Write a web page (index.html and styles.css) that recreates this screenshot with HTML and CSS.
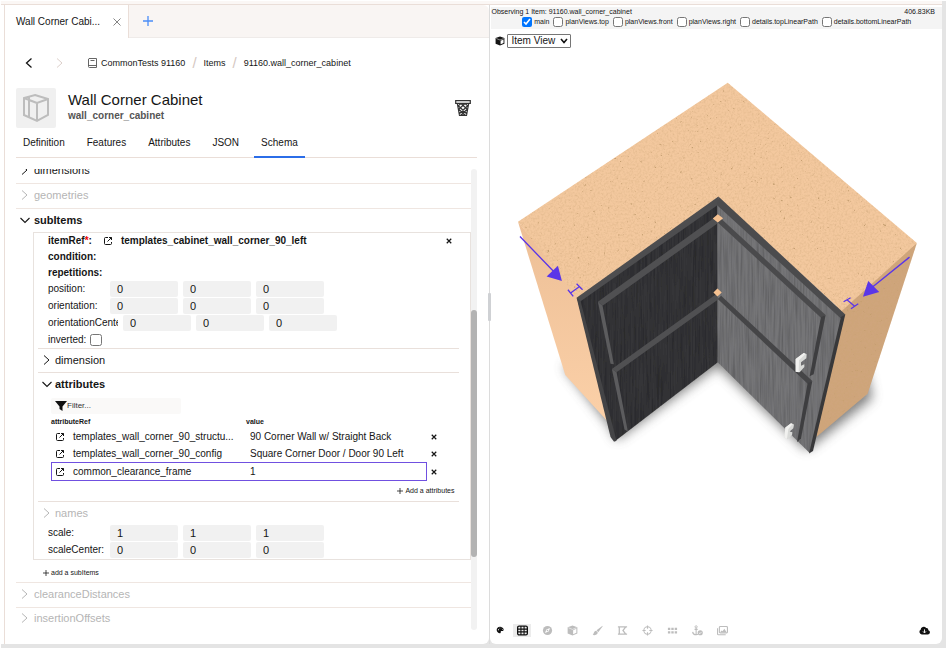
FILE: index.html
```html
<!DOCTYPE html>
<html lang="en">
<head>
    <meta charset="UTF-8">
    <meta name="viewport" content="width=device-width, initial-scale=1.0">
    <title>Wall Corner Cabinet</title>
    <link rel="stylesheet" href="styles.css">
</head>
<body>
    <!-- Shared icons -->
    <svg class="sprite" width="0" height="0" aria-hidden="true">
        <symbol id="chevron-right" viewBox="0 0 10 10"><path d="M2 0.5 7 5 2 9.5" fill="none" stroke="currentColor"/></symbol>
        <symbol id="chevron-left" viewBox="0 0 10 10"><path d="M7.5 0.5 2.5 5 7.5 9.5" fill="none" stroke="currentColor" stroke-width="1.3"/></symbol>
        <symbol id="chevron-down" viewBox="0 0 10 10"><path d="M0.5 3 5 7.5 9.5 3" fill="none" stroke="currentColor" stroke-width="1.1"/></symbol>
        <symbol id="open" viewBox="0 0 10 10"><path d="M5 1.5H2.5Q1.5 1.5 1.5 2.5V7.5Q1.5 8.5 2.5 8.5H7.5Q8.5 8.5 8.5 7.5V6M6 1.5H8.5V4M8.5 1.5 4.5 5.5" fill="none" stroke="currentColor" stroke-width="1"/></symbol>
        <symbol id="close" viewBox="0 0 8 8"><path d="M1 1 7 7M7 1 1 7" stroke="currentColor" stroke-width="1.6"/></symbol>
        <symbol id="plus" viewBox="0 0 10 10"><path d="M5 0V10M0 5H10" stroke="currentColor" stroke-width="1.3"/></symbol>
        <symbol id="cube" viewBox="0 0 12 12"><path d="M6 .5 11.3 2.5V9.3L6 11.5.7 9.3V2.5Z" fill="currentColor"/><path d="M6.7 5.6 10.2 4.2V8.5L6.7 10Z" fill="#fff"/><path d="M1.5 3 6 4.8 10.5 3" fill="none" stroke="#fff" stroke-width=".6"/></symbol>
    </svg>

    <div class="window">
        <div class="titlebar"></div>
        <div class="panes">
            <main class="editor">
                <div class="tabstrip">
                    <div class="doc-tab">
                        <span>Wall Corner Cabi...</span>
                        <button class="icon-btn" aria-label="Close tab"><svg class="tab-x" viewBox="0 0 8 8"><path d="M.5.5 7.5 7.5M7.5.5.5 7.5" stroke="#666" stroke-width=".8"/></svg></button>
                    </div>
                    <button class="icon-btn new-tab" aria-label="New tab"><svg><use href="#plus"/></svg></button>
                </div>

                <div class="editor-body">
                    <nav class="crumbs">
                        <button class="icon-btn" aria-label="Back"><svg><use href="#chevron-left"/></svg></button>
                        <button class="icon-btn forward" aria-label="Forward"><svg><use href="#chevron-right"/></svg></button>
                        <a href="#"><svg class="book" viewBox="0 0 9 10"><path d="M1 .5H8.5V9.5H1.5Q.5 9.5.5 8.5V1ZM.5 7.5H8.5M2.5 2.5H6.5" fill="none" stroke="#555" stroke-width=".9"/></svg>CommonTests 91160</a>
                        <i>/</i>
                        <a href="#">Items</a>
                        <i>/</i>
                        <a href="#">91160.wall_corner_cabinet</a>
                    </nav>

                    <header class="item-head">
                        <div class="thumb">
                            <svg viewBox="0 0 28 30"><path d="M13 2 26 6V22L15 28 2 22V5ZM2 5 15 10 26 6M15 10V28M7 3.5V24.5M7 7 15 10" fill="none" stroke="#bdbdbd" stroke-width="2"/></svg>
                        </div>
                        <div class="item-name">
                            <h1>Wall Corner Cabinet</h1>
                            <p>wall_corner_cabinet</p>
                        </div>
                        <button class="icon-btn trash" aria-label="Delete item">
                            <svg viewBox="0 0 16 16"><path d="M.7.7H15.3V3.3H.7ZM2.3 3.5 4.5 15.3H11.5L13.7 3.5M3 6 6 3.5 12.5 9.5M3.5 9 10 15M13 6 10 3.5 3.5 9.5M12.5 9 6 15M3 5.5 12 14M13 5.5 4 14" fill="none" stroke="#333" stroke-width="1.2"/></svg>
                        </button>
                    </header>

                    <nav class="tabs">
                        <a href="#">Definition</a>
                        <a href="#">Features</a>
                        <a href="#">Attributes</a>
                        <a href="#">JSON</a>
                        <a href="#" class="active">Schema</a>
                    </nav>

                    <div class="scroller">
                        <div class="schema">
                            <button class="section scrolled"><svg><use href="#chevron-right"/></svg>dimensions</button>
                            <button class="section empty"><svg><use href="#chevron-right"/></svg>geometries</button>
                            <button class="section open"><svg><use href="#chevron-down"/></svg>subItems</button>

                            <div class="subitem">
                                <div class="fields">
                                    <div class="ref-row">
                                        <span>itemRef<em>*</em>:</span>
                                        <button class="icon-btn" aria-label="Open itemRef"><svg><use href="#open"/></svg></button>
                                        <span class="ref-value">templates_cabinet_wall_corner_90_left</span>
                                        <button class="icon-btn remove" aria-label="Remove subItem"><svg><use href="#close"/></svg></button>
                                    </div>
                                    <div class="ref-row">condition:</div>
                                    <div class="ref-row">repetitions:</div>
                                    <div class="vector">
                                        <label for="posX">position:</label>
                                        <input id="posX" value="0"><input aria-label="position y" value="0"><input aria-label="position z" value="0">
                                    </div>
                                    <div class="vector">
                                        <label for="oriX">orientation:</label>
                                        <input id="oriX" value="0"><input aria-label="orientation y" value="0"><input aria-label="orientation z" value="0">
                                    </div>
                                    <div class="vector long">
                                        <label for="oricX">orientationCenter:</label>
                                        <input id="oricX" value="0"><input aria-label="orientationCenter y" value="0"><input aria-label="orientationCenter z" value="0">
                                    </div>
                                    <div class="inverted">
                                        <label for="inverted">inverted:</label>
                                        <input type="checkbox" id="inverted">
                                    </div>
                                </div>

                                <div class="nested">
                                    <button class="section"><svg><use href="#chevron-right"/></svg>dimension</button>
                                </div>

                                <div class="nested">
                                    <button class="section open"><svg><use href="#chevron-down"/></svg>attributes</button>
                                    <div class="attributes">
                                        <div class="filter">
                                            <svg viewBox="0 0 12 10"><path d="M0 0H12L7.5 5.5V10L4.5 8V5.5Z" fill="#111"/></svg>
                                            <input type="text" placeholder="Filter..." aria-label="Filter">
                                        </div>
                                        <table>
                                            <thead>
                                                <tr><th>attributeRef</th><th>value</th><th></th></tr>
                                            </thead>
                                            <tbody>
                                                <tr>
                                                    <td><button class="icon-btn" aria-label="Open"><svg><use href="#open"/></svg></button>templates_wall_corner_90_structu...</td>
                                                    <td>90 Corner Wall w/ Straight Back</td>
                                                    <td><button class="icon-btn remove" aria-label="Remove"><svg><use href="#close"/></svg></button></td>
                                                </tr>
                                                <tr>
                                                    <td><button class="icon-btn" aria-label="Open"><svg><use href="#open"/></svg></button>templates_wall_corner_90_config</td>
                                                    <td>Square Corner Door / Door 90 Left</td>
                                                    <td><button class="icon-btn remove" aria-label="Remove"><svg><use href="#close"/></svg></button></td>
                                                </tr>
                                                <tr class="selected">
                                                    <td><button class="icon-btn" aria-label="Open"><svg><use href="#open"/></svg></button>common_clearance_frame</td>
                                                    <td>1</td>
                                                    <td><button class="icon-btn remove" aria-label="Remove"><svg><use href="#close"/></svg></button></td>
                                                </tr>
                                            </tbody>
                                        </table>
                                        <button class="add"><svg><use href="#plus"/></svg>Add a attributes</button>
                                    </div>
                                </div>

                                <div class="nested">
                                    <button class="section empty"><svg><use href="#chevron-right"/></svg>names</button>
                                </div>

                                <div class="fields">
                                    <div class="vector">
                                        <label for="scaleX">scale:</label>
                                        <input id="scaleX" value="1"><input aria-label="scale y" value="1"><input aria-label="scale z" value="1">
                                    </div>
                                    <div class="vector">
                                        <label for="scalecX">scaleCenter:</label>
                                        <input id="scalecX" value="0"><input aria-label="scaleCenter y" value="0"><input aria-label="scaleCenter z" value="0">
                                    </div>
                                </div>
                            </div>

                            <button class="add add-sub"><svg><use href="#plus"/></svg>add a subItems</button>
                            <button class="section empty"><svg><use href="#chevron-right"/></svg>clearanceDistances</button>
                            <button class="section empty"><svg><use href="#chevron-right"/></svg>insertionOffsets</button>
                        </div>
                        <div class="scrollbar"><div class="thumb-bar"></div></div>
                    </div>
                </div>
            </main>

            <div class="splitter"><span></span></div>

            <section class="viewer">
                <div class="observe">
                    <div class="observe-info"><span>Observing 1 Item: 91160.wall_corner_cabinet</span><span>406.83KB</span></div>
                    <div class="views">
                        <label><input type="checkbox" checked>main</label>
                        <label><input type="checkbox">planViews.top</label>
                        <label><input type="checkbox">planViews.front</label>
                        <label><input type="checkbox">planViews.right</label>
                        <label><input type="checkbox">details.topLinearPath</label>
                        <label><input type="checkbox">details.bottomLinearPath</label>
                    </div>
                </div>
                <div class="view-select">
                    <svg><use href="#cube"/></svg>
                    <select aria-label="View"><option>Item View</option></select>
                </div>

                <div class="stage">
                    <svg viewBox="-30 -66 1356 1640" role="img" aria-label="Corner cabinet model">
                        <defs>
                            <filter id="board" x="0" y="0" width="100%" height="100%">
                                <feTurbulence type="fractalNoise" baseFrequency="0.1" numOctaves="3" seed="4"/>
                                <feColorMatrix values="0 0 0 0 .55  0 0 0 0 .34  0 0 0 0 .16  0 -7 0 0 1.9" result="n"/>
                                <feTurbulence type="fractalNoise" baseFrequency="0.16" numOctaves="2" seed="9"/>
                                <feColorMatrix values="0 0 0 0 .6  0 0 0 0 .38  0 0 0 0 .18  .9 0 0 0 -.38" result="s"/>
                                <feComposite in="n" in2="SourceGraphic" operator="in" result="a"/>
                                <feComposite in="s" in2="SourceGraphic" operator="in" result="b"/>
                                <feMerge><feMergeNode in="SourceGraphic"/><feMergeNode in="a"/><feMergeNode in="b"/></feMerge>
                            </filter>
                            <filter id="grain" x="0" y="0" width="100%" height="100%">
                                <feTurbulence type="fractalNoise" baseFrequency="0.18 0.008" numOctaves="2" seed="3"/>
                                <feColorMatrix values="0 0 0 0 0  0 0 0 0 0  0 0 0 0 0  .7 0 0 0 -.26" result="n"/>
                                <feComposite in="n" in2="SourceGraphic" operator="in" result="a"/>
                                <feMerge><feMergeNode in="SourceGraphic"/><feMergeNode in="a"/></feMerge>
                            </filter>
                            <filter id="soft" x="-20%" y="-20%" width="140%" height="140%"><feGaussianBlur stdDeviation="18"/></filter>
                            <linearGradient id="side" x1="0" y1="0" x2="0" y2="1"><stop offset="0" stop-color="#edbf96"/><stop offset="1" stop-color="#fbd0a8"/></linearGradient>
                        </defs>

                        <!-- Floor shadow -->
                        <path d="M190 890 330 1070 350 1112 654 890 920 1142 950 1120 1118 985 1100 900 654 780Z" fill="#555" opacity=".75" filter="url(#soft)"/>

                        <!-- Carcass -->
                        <path d="M54 456 240 680 322 1054 196 916Z" fill="url(#side)"/>
                        <path d="M1252 520 1010 710 950 1102 1104 972Z" fill="#cfa57c" filter="url(#board)"/>
                        <path d="M684 38 1252 520 1026 724 656 384 234 686 54 456Z" fill="#f3c89e" filter="url(#board)"/>

                        <!-- Left door -->
                        <path d="M232 686 654 402V878L344 1116Z" fill="#363638" filter="url(#grain)"/>
                        <path d="M230 684 656 380V404L240 696Z" fill="#4d4d4f"/>
                        <path d="M230 684 242 694 350 1114 342 1116 332 1102Z" fill="#444446"/>
                        <path d="M294 696 654 436V460L308 708Z" fill="#505052"/>
                        <path d="M294 696 308 708 342 884 332 882Z" fill="#5c5c5e"/>
                        <path d="M336 898 654 670V690L350 908Z" fill="#505052"/>
                        <path d="M336 898 350 908 384 1086 374 1080Z" fill="#5c5c5e"/>

                        <!-- Right door -->
                        <path d="M654 404 1026 742 930 1150 654 878Z" fill="#757577" filter="url(#grain)"/>
                        <path d="M656 380 1037 734 1024 746 652 406Z" fill="#4b4b4d"/>
                        <path d="M1024 742 1037 734 940 1144 928 1152Z" fill="#38383a"/>
                        <path d="M654 458 666 448 978 736 964 744Z" fill="#4a4a4c"/>
                        <path d="M964 742 978 736 942 914 930 920Z" fill="#3e3e40"/>
                        <path d="M654 688 664 678 938 934 924 942Z" fill="#454547"/>
                        <path d="M924 940 938 934 904 1106 892 1118Z" fill="#3e3e40"/>

                        <path d="M654 433 670 445 654 458 639 446ZM653 656 666 668 653 680 641 668Z" fill="#f5c191"/>

                        <!-- Handles -->
                        <path d="M888 868 912 850 921 854 920 866 904 878V888L914 884 914 892 900 908 888 906Z" fill="#d9dad8"/>
                        <path d="M888 868 912 850 918 852 898 872 897 908 888 906Z" fill="#f1f1ef"/>
                        <path d="M857 1074 874 1061 883 1065 881 1076 870 1086 878 1088 877 1096 864 1109 854 1104Z" fill="#d9dad8"/>
                        <path d="M857 1074 874 1061 879 1063 866 1078 862 1108 854 1104Z" fill="#f1f1ef"/>

                        <!-- Clearance markers -->
                        <g stroke="#5b36e8" stroke-width="4" fill="none">
                            <path d="M60 500 162 606M204 660 220 680M230 642 248 660M212 670 238 651"/>
                            <path d="M1230 562 1116 654M1032 696 1053 684M1054 717 1076 702M1042 690 1066 710"/>
                        </g>
                        <path d="M186 634 140 620 174 588ZM1090 681 1106 634 1139 667Z" fill="#5b36e8"/>
                    </svg>
                </div>

                <div class="toolbar">
                    <button class="tool dark small" aria-label="Materials"><svg viewBox="0 0 12 12"><path fill-rule="evenodd" d="M6 1C9 1 11.5 3 11.5 5.5 11.5 7.5 9.5 7.5 8 7.5 6.5 7.5 7.5 9 7 10 6 12 1 10 1 6 1 3 3 1 6 1ZM3 5V6.5H4.5V5ZM4.5 2.5V3.5H5.5V2.5ZM7 2.5V3.5H8V2.5ZM9 4.5V5.5H10V4.5Z" fill="currentColor"/></svg></button>
                    <button class="tool dark on" aria-label="Grid"><svg viewBox="0 0 12 12"><rect x=".7" y="1.2" width="10.6" height="9.6" rx="1.5" fill="none" stroke="currentColor" stroke-width="1.4"/><path d="M4.3 1V11M7.7 1V11M1 4.5H11M1 7.5H11" stroke="currentColor" stroke-width="1.2"/></svg></button>
                    <button class="tool" aria-label="Orbit"><svg viewBox="0 0 12 12"><circle cx="6" cy="6" r="5" fill="currentColor"/><path d="M8.8 3.2 7.2 7.2 3.2 8.8 4.8 4.8Z" fill="#fff"/><circle cx="6" cy="6" r=".9" fill="currentColor"/></svg></button>
                    <button class="tool" aria-label="Solid"><svg><use href="#cube"/></svg></button>
                    <button class="tool" aria-label="Paint"><svg viewBox="0 0 12 12"><path d="M11.5.7 5 5.8 6.8 7.8 11.5 1.5ZM4.5 6.2 6.3 8.3C6 11 3 11.5.7 11 2 10 1.5 7 4.5 6.2Z" fill="currentColor"/></svg></button>
                    <button class="tool" aria-label="Outline"><svg viewBox="0 0 12 12"><path d="M2.5 2H9.5L6.5 6 9.5 10H2.5ZM1 2H4M8 2H11M1 10H4M8 10H11" fill="none" stroke="currentColor" stroke-width="1.4"/></svg></button>
                    <button class="tool" aria-label="Center"><svg viewBox="0 0 12 12"><circle cx="6" cy="6" r="4" fill="none" stroke="currentColor" stroke-width="1.1"/><path d="M6 .5V4M6 8V11.5M.5 6H4M8 6H11.5" stroke="currentColor" stroke-width="1.2"/></svg></button>
                    <button class="tool" aria-label="Points"><svg viewBox="0 0 12 12"><path d="M1 4.2H11M1 8H11" stroke="currentColor" stroke-width="2.4" stroke-dasharray="2.6 1.1"/></svg></button>
                    <button class="tool" aria-label="Anchors"><svg viewBox="0 0 12 12"><circle cx="4.5" cy="2" r="1.2" fill="none" stroke="currentColor"/><path d="M4.5 3V10.5M2.8 4.8H6.2M.7 7.5Q1 10.5 4.5 10.7 6 10.6 6.5 10" fill="none" stroke="currentColor" stroke-width="1.2"/><circle cx="9" cy="8.5" r="2.8" fill="currentColor"/><path d="M7.6 8.5 8.7 9.5 10.4 7.5" fill="none" stroke="#fff" stroke-width=".8"/></svg></button>
                    <button class="tool" aria-label="Images"><svg viewBox="0 0 12 12"><rect x="2.6" y="1.6" width="8.8" height="7" rx="1" fill="none" stroke="currentColor" stroke-width="1.2"/><path d="M.6 3.5V9.7Q.6 10.7 1.6 10.7H9.5" fill="none" stroke="currentColor" stroke-width="1.2"/><path d="M3.5 7.8 5 6 6 6.8 8 4 10.5 7.8Z" fill="currentColor"/></svg></button>
                    <button class="tool dark download" aria-label="Download"><svg viewBox="0 0 12 12"><path d="M3 10.3A2.7 2.7 0 0 1 1.8 5.3 3.3 3.3 0 0 1 7.8 3.3 2.2 2.2 0 0 1 10.2 5.6 2.4 2.4 0 0 1 9.6 10.3Z" fill="currentColor"/><path d="M6 4.8V8.5M4.4 7 6 8.7 7.6 7" fill="none" stroke="#fff" stroke-width="1"/></svg></button>
                </div>
            </section>
        </div>
    </div>
</body>
</html>
```
FILE: styles.css
```css
* {
    box-sizing: border-box;
}

body {
    margin: 0;
    padding: 1px 2px 1px 1px;
    background: #fff;
    color: #151515;
    font-family: "Liberation Sans", Arial, sans-serif;
    font-size: 10px;
    line-height: 16px;
}

button,
input,
select {
    font: inherit;
    color: inherit;
    margin: 0;
}

button {
    border: 0;
    padding: 0;
    background: none;
    cursor: pointer;
}

a {
    color: inherit;
    text-decoration: none;
}

svg {
    display: block;
    flex: none;
    width: 10px;
    height: 10px;
}

.sprite {
    position: absolute;
    width: 0;
    height: 0;
}

.icon-btn {
    display: inline-flex;
    align-items: center;
    justify-content: center;
}

/* Window frame */
.window {
    display: flex;
    flex-direction: column;
    min-height: calc(100vh - 2px);
    border-right: 4px solid #e4e4e4;
    border-bottom: 4px solid #e4e4e4;
}

.titlebar {
    height: 4px;
    background: #fbf7f5;
    border-bottom: 1px solid #eaded8;
}

.panes {
    flex: 1;
    display: flex;
    background: #e4e4e4;
    border-left: 3px solid #fff;
}

.editor {
    flex: 485 1 0;
    min-width: 0;
    display: flex;
    flex-direction: column;
    background: #fff;
    border-left: 1px solid #eaded8;
    border-radius: 0 0 6px 0;
}

/* Document tabs */
.tabstrip {
    display: flex;
    height: 33px;
    background: #f9f5f3;
    border-bottom: 1px solid #efebe9;
    border-radius: 0 6px 0 0;
}

.doc-tab {
    display: flex;
    align-items: center;
    justify-content: space-between;
    width: 124px;
    height: 33px;
    padding: 0 7px 0 11px;
    background: #fff;
    border-right: 1px solid #eaded8;
}

.tab-x {
    width: 8px;
    height: 8px;
}

.new-tab {
    margin-left: 14px;
    color: #4b8df8;
}

.editor-body {
    flex: 1;
    display: flex;
    flex-direction: column;
    padding: 16px 12px 14px 11px;
}

/* Breadcrumbs */
.crumbs {
    display: flex;
    align-items: center;
    gap: 7px;
    height: 18px;
    padding-left: 8px;
    font-size: 9px;
}

.crumbs a {
    display: flex;
    align-items: center;
    gap: 4px;
}

.crumbs i {
    color: #d5c8c2;
    font-size: 15px;
    font-style: normal;
}

.crumbs .forward {
    margin: 0 16px 0 14px;
    color: #dccfca;
}

.book {
    width: 9px;
}

/* Item header */
.item-head {
    display: flex;
    align-items: center;
    gap: 12px;
    margin-top: 16px;
}

.thumb {
    display: flex;
    align-items: center;
    justify-content: center;
    width: 40px;
    height: 40px;
    background: #f0f0f0;
    border-radius: 2px;
}

.thumb svg {
    width: 28px;
    height: 30px;
}

.item-name {
    flex: 1;
    padding-bottom: 2px;
}

.item-name h1 {
    margin: 0;
    font-size: 15px;
    font-weight: normal;
    line-height: 18px;
}

.item-name p {
    margin: 0;
    color: #555;
    font-weight: bold;
    line-height: 14px;
}

.trash {
    margin-right: 6px;
}

.trash svg {
    width: 16px;
    height: 16px;
}

/* Section tabs */
.tabs {
    display: flex;
    gap: 8px;
    height: 30px;
    border-bottom: 1px solid #eaded8;
}

.tabs a {
    height: 30px;
    padding: 7px 7px 0;
}

.tabs .active {
    border-bottom: 2px solid #2b6de8;
}

/* Schema tree */
.scroller {
    flex: 1;
    display: flex;
    margin-top: 11px;
}

.schema {
    flex: 1;
    min-width: 0;
    overflow: hidden;
}

.scrollbar {
    width: 6px;
    padding-top: 141px;
    background: #f2f2f2;
    border-radius: 3px;
}

.thumb-bar {
    height: 247px;
    background: #b3b3b3;
    border-radius: 3px;
}

.section {
    display: flex;
    align-items: center;
    gap: 4px;
    width: 100%;
    height: 25px;
    padding: 0 0 2px 4px;
    border-bottom: 1px solid #efe6e1;
    text-align: left;
    font-size: 11px;
}

.scrolled {
    margin-top: -10px;
}

.section.empty {
    color: #b5b5b5;
}

.section.open {
    height: 23px;
    border-bottom: 0;
    font-weight: bold;
}

.schema > .section:last-child {
    height: 22px;
    border-bottom: 0;
}

.subitem {
    margin-left: 17px;
    border: 1px solid #e8e2de;
}

.fields {
    padding-left: 14px;
}

.ref-row {
    display: flex;
    align-items: center;
    height: 16px;
    font-weight: bold;
}

.ref-row em {
    color: #e00;
    font-style: normal;
}

.ref-row .icon-btn {
    margin: 0 8px 0 11px;
}

.ref-row .remove {
    margin: 0 18px 0 auto;
}

.remove svg {
    width: 6px;
    height: 6px;
}

.vector {
    display: flex;
    gap: 5px;
    height: 16px;
    margin-bottom: 1px;
}

.vector label {
    width: 57px;
    overflow: hidden;
    white-space: nowrap;
}

.vector.long label {
    width: 70px;
}

.vector input {
    width: 68px;
    height: 16px;
    padding: 0 7px;
    border: 0;
    border-radius: 2px;
    background: #f1f1f1;
    font-size: 11px;
}

.inverted {
    display: flex;
    align-items: center;
    gap: 4px;
    height: 16px;
}

.inverted input {
    width: 12px;
    height: 12px;
}

.nested {
    margin: 0 11px 0 4px;
    border-top: 1px solid #e9e0db;
}

.nested .section {
    height: 23px;
    gap: 3px;
    border-bottom: 0;
}

.attributes {
    padding-left: 13px;
}

.filter {
    display: flex;
    align-items: center;
    width: 130px;
    height: 16px;
    margin: 2px 0;
    padding-left: 4px;
    background: #faf9f8;
    border-radius: 2px;
}

.filter svg {
    width: 12px;
}

.filter input {
    flex: 1;
    min-width: 0;
    height: 14px;
    padding: 0;
    border: 0;
    background: none;
    font-size: 8px;
}

.filter input::placeholder {
    color: #333;
}

table {
    width: 100%;
    table-layout: fixed;
    border-collapse: separate;
    border-spacing: 0;
}

th {
    height: 12px;
    padding: 0;
    text-align: left;
    font-size: 7px;
    line-height: 12px;
}

th:nth-child(1) {
    width: 195px;
}

th:nth-child(3) {
    width: 32px;
}

td {
    height: 17px;
    padding: 0 4px;
    line-height: 16px;
    white-space: nowrap;
}

td .icon-btn {
    margin-right: 8px;
    vertical-align: middle;
}

.selected td {
    height: 19px;
}

.selected td:nth-child(1) {
    border: 1px solid #7050e0;
    border-right: 0;
    padding-left: 3px;
}

.selected td:nth-child(2) {
    border: 1px solid #7050e0;
    border-left: 0;
}

.add {
    display: flex;
    align-items: center;
    gap: 2px;
    height: 20px;
    font-size: 7px;
}

.add svg {
    width: 6px;
    height: 6px;
}

.attributes .add {
    margin: 0 5px 0 auto;
}

.add-sub {
    width: 100%;
    height: 23px;
    padding: 3px 0 0 27px;
    border-bottom: 1px solid #efe6e1;
}

/* Splitter */
.splitter {
    display: flex;
    align-items: center;
    width: 1px;
    background: #dcdcdc;
}

.splitter span {
    flex: none;
    width: 3px;
    height: 28px;
    margin: 0 0 36px -1px;
    background: #cfd1d4;
    border-radius: 1px;
    z-index: 1;
}

/* Viewer */
.viewer {
    flex: 452 1 0;
    min-width: 0;
    display: flex;
    flex-direction: column;
    background: #fff;
    border-radius: 0 0 6px 6px;
}

.observe {
    margin: 2px 0 0 1px;
    padding-bottom: 1px;
    background: #f4f4f4;
    font-size: 7px;
}

.observe-info {
    display: flex;
    justify-content: space-between;
    padding-right: 7px;
    line-height: 9px;
}

.views {
    display: flex;
    justify-content: center;
    gap: 4px;
    height: 12px;
}

.views label {
    display: flex;
    align-items: center;
    gap: 2px;
    white-space: nowrap;
}

.views input {
    width: 10px;
    height: 10px;
}

.view-select {
    display: flex;
    align-items: center;
    gap: 2px;
    margin: 5px 0 0 5px;
}

.view-select select {
    appearance: none;
    width: 64px;
    height: 14px;
    padding: 0 0 0 3px;
    border: 1px solid #767676;
    border-radius: 1px;
    background: #fff url("data:image/svg+xml,%3Csvg xmlns='http://www.w3.org/2000/svg' viewBox='0 0 8 6'%3E%3Cpath d='M1 1 4 4.5 7 1' fill='none' stroke='%23111' stroke-width='1.6'/%3E%3C/svg%3E") no-repeat right 2px center / 8px 6px;
    line-height: 12px;
}

.stage {
    flex: 1;
}

.stage svg {
    width: 100%;
    height: auto;
}

.toolbar {
    display: flex;
    align-items: center;
    gap: 7px;
    height: 14px;
    margin: 0 9px 7px 4px;
}

.tool {
    display: flex;
    align-items: center;
    justify-content: center;
    width: 18px;
    height: 13px;
    color: #bdbdbd;
}

.tool svg {
    width: 11px;
    height: 11px;
}

.tool.dark {
    color: #111;
}

.tool.small {
    width: 12px;
}

.tool.small svg {
    width: 8px;
    height: 8px;
}

.tool.on {
    background: #ececec;
}

.download {
    margin-left: auto;
}
```
